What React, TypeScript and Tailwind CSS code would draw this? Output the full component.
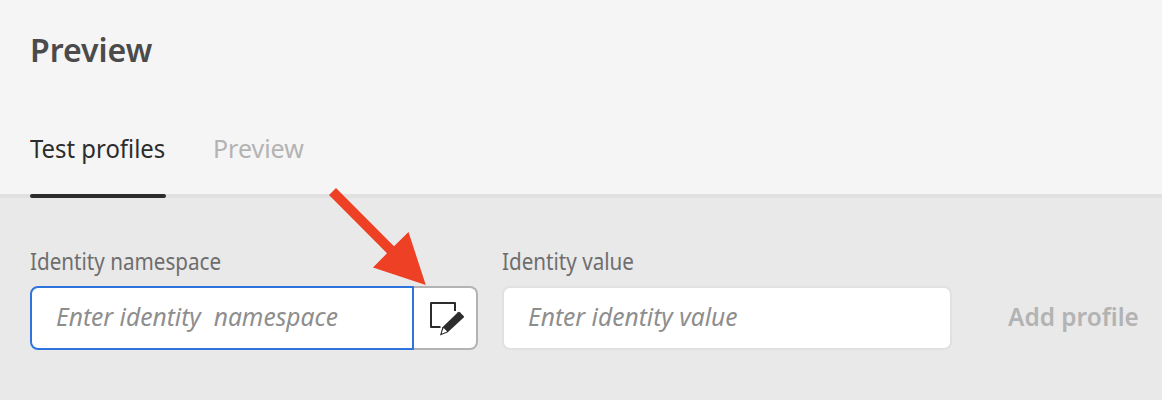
import React from "react";

function EditIcon() {
  return (
    <svg width="36" height="36" viewBox="0 0 36 36" fill="none" aria-hidden="true">
      <path d="M26 11V3H2v24h9.5" stroke="#2c2c2c" strokeWidth="2" strokeLinejoin="round" />
      <path
        d="M29 12.2a1.5 1.5 0 0 1 1.8 0l3.9 3.9a1.2 1.2 0 0 1 0 1.5L18.5 32.4 11 35.6l2.4-8.4Z"
        fill="#2c2c2c"
      />
      <path d="m14.6 28.1 3.5 3.4-4.8 2.1-.5-.5Z" fill="#fff" />
    </svg>
  );
}

function Arrow() {
  return (
    <svg
      className="pointer-events-none absolute left-[320px] top-[180px]"
      width="110"
      height="110"
      viewBox="320 180 110 110"
      aria-hidden="true"
    >
      <path d="M336 188 394 246.3 408.5 232 425.8 285 373 267.5 387 253.3 329 195Z" fill="#ed4025" />
    </svg>
  );
}

export default function App() {
  return (
    <div className="relative flex h-[400px] w-[1162px] flex-col overflow-hidden bg-[#e9e9e9] font-['Noto_Sans','Open_Sans',sans-serif] whitespace-pre">
      <header className="flex h-[198px] shrink-0 flex-col justify-between border-b-4 border-[#e1e1e1] bg-[#f5f5f5] px-[30px] pt-[26px]">
        <h1 className="flex text-[32.5px] leading-[48px] font-semibold text-[#4b4b4b]">
          <span className="inline-block origin-left scale-x-[0.985]">Preview</span>
        </h1>
        <nav className="-mb-1 flex h-[69px] gap-[47px]">
          <div className="flex w-[136px] flex-col justify-between">
            <span className="w-max origin-left scale-x-[0.918] text-[26px] leading-[38px] text-[#2c2c2c]">Test profiles</span>
            <span className="h-1 rounded-sm bg-[#2c2c2c]" />
          </div>
          <span className="h-max w-max origin-left scale-x-[0.96] text-[26px] leading-[38px] text-[#b3b3b3]">Preview</span>
        </nav>
      </header>
      <main className="flex pt-[48px] pl-[30px]">
        <div className="flex w-[448px] shrink-0 flex-col">
          <label className="h-10 w-max origin-left scale-x-[0.905] text-[22.8px] leading-8 text-[#6e6e6e]">Identity namespace</label>
          <div className="flex h-16">
            <div className="flex w-96 items-center rounded-l-lg border-2 border-[#2f73dc] bg-white pb-[5px] pl-6">
              <span className="w-max origin-left scale-x-[0.965] text-[25.5px] leading-8 text-[#8e8e8e] italic">Enter identity  namespace</span>
            </div>
            <button className="flex w-16 items-center rounded-r-lg border-2 border-l-0 border-[#b3b3b3] bg-white pl-[15px]">
              <EditIcon />
            </button>
          </div>
        </div>
        <div className="ml-6 flex w-[450px] shrink-0 flex-col">
          <label className="h-10 w-max origin-left scale-x-[0.905] text-[22.8px] leading-8 text-[#6e6e6e]">Identity value</label>
          <div className="flex h-16 items-center rounded-lg border-2 border-[#e1e1e1] bg-white pb-[5px] pl-6">
            <span className="w-max origin-left scale-x-[0.965] text-[25.5px] leading-8 text-[#8e8e8e] italic">Enter identity value</span>
          </div>
        </div>
        <button className="mt-10 ml-14 flex h-16 w-[131px] shrink-0 items-center pb-[5px] font-semibold text-[#b3b3b3]">
          <span className="w-max origin-left scale-x-[0.957] text-[25.5px] leading-8">Add profile</span>
        </button>
      </main>
      <Arrow />
    </div>
  );
}
